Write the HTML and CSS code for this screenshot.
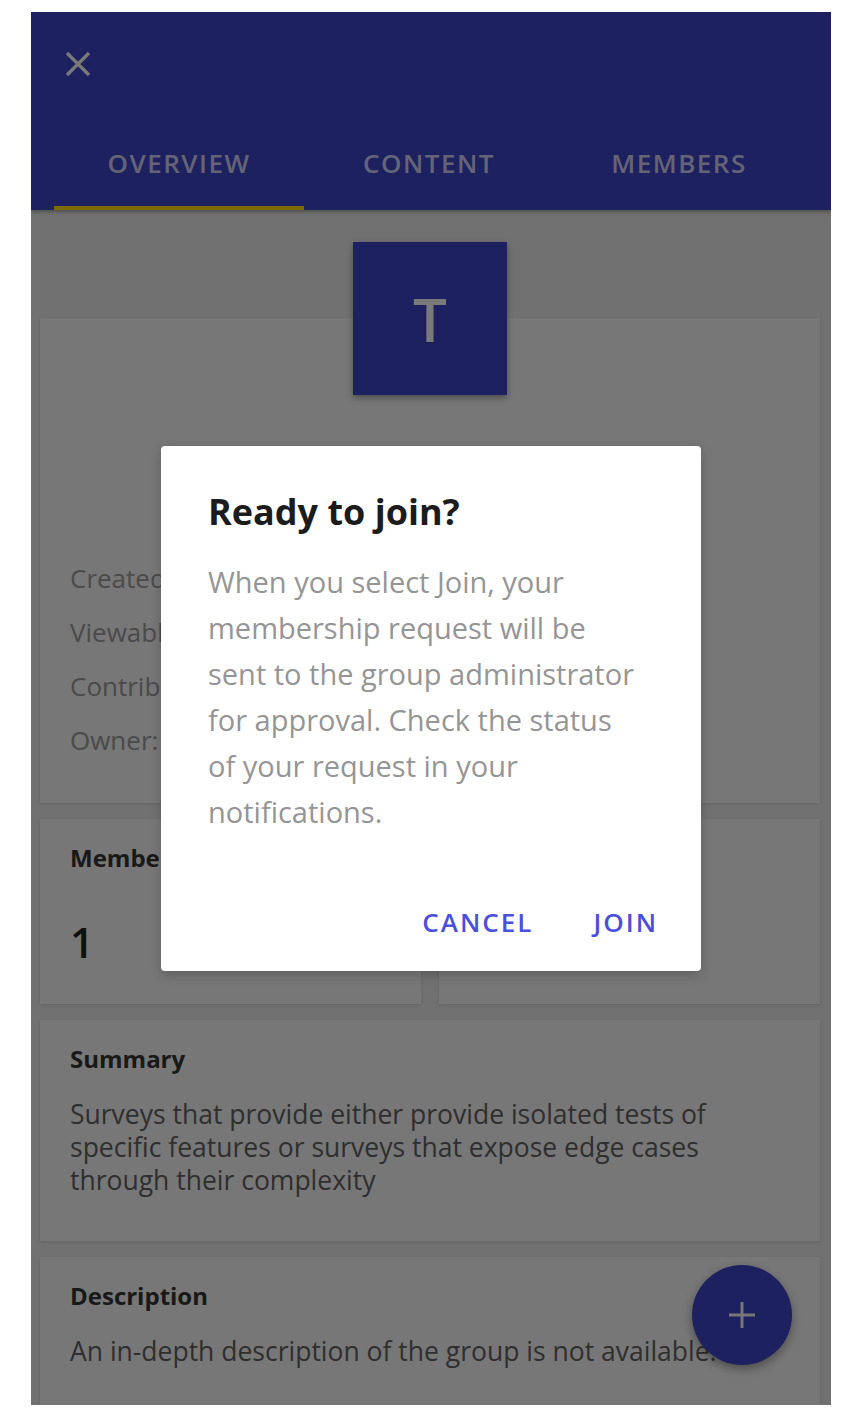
FILE: index.html
```html
<!DOCTYPE html>
<html lang="en">

	<head>
		<meta charset="UTF-8" />
		<meta name="viewport" content="width=device-width, initial-scale=1.0" />
		<title>Group overview</title>
		<link rel="stylesheet" href="styles.css">
	</head>

	<body>
		<div class="app">
			<header class="appbar">
				<div class="toolbar">
					<button class="close" aria-label="Close">
						<svg viewBox="0 0 28 28" width="28" height="28">
							<path d="M3 3 L25 25 M25 3 L3 25" />
						</svg>
					</button>
				</div>
				<nav class="tabs">
					<a class="tab active">Overview</a>
					<a class="tab">Content</a>
					<a class="tab">Members</a>
				</nav>
			</header>

			<main class="content">
				<div class="hero">
					<div class="avatar">T</div>
				</div>

				<section class="card info">
					<ul class="meta">
						<li>Created: 3/12/19</li>
						<li>Viewable by: All</li>
						<li>Contributors: All</li>
						<li>Owner: admin</li>
					</ul>
				</section>

				<div class="stats">
					<section class="card stat">
						<h2>Members</h2>
						<div class="count">1</div>
					</section>
					<!-- content count sits under the dialog -->
					<section class="card stat"></section>
				</div>

				<section class="card">
					<h2>Summary</h2>
					<p>Surveys that provide either provide isolated tests of specific features or surveys that expose edge cases
						through their complexity</p>
				</section>

				<section class="card">
					<h2>Description</h2>
					<p>An in-depth description of the group is not available.</p>
				</section>
			</main>

			<button class="fab" aria-label="Add">
				<svg viewBox="0 0 30 30" width="30" height="30">
					<path d="M15 2 V28 M2 15 H28" />
				</svg>
			</button>

			<div class="scrim">
				<div class="dialog">
					<h3 class="dialog-title">Ready to join?</h3>
					<p class="dialog-text">When you select Join, your membership request will be sent to the group administrator
						for approval. Check the status of your request in your notifications.</p>
					<div class="dialog-actions">
						<button class="btn">Cancel</button>
						<button class="btn">Join</button>
					</div>
				</div>
			</div>
		</div>
	</body>

</html>
```

FILE: styles.css
```css
body {
	margin: 0;
	background: #fff;
	font-family: "Open Sans", "Lato", sans-serif;
}

.app {
	position: relative;
	width: 800px;
	height: 1393px;
	margin: 12px 0 0 31px;
	overflow: hidden;
	background: #e2e2e2;
}

/* header */
.appbar {
	background: #3c42c0;
	box-shadow: 0 2px 4px rgba(0, 0, 0, 0.3);
	position: relative;
	z-index: 2;
}

.toolbar {
	height: 104px;
	display: flex;
	align-items: center;
	padding-left: 33px;
}

.close {
	background: none;
	border: 0;
	padding: 0;
	width: 28px;
	height: 28px;
	display: flex;
}

.close path {
	stroke: #f4f4f0;
	stroke-width: 3.2;
	fill: none;
}

.tabs {
	display: flex;
	padding: 0 27px 0 23px;
}

.tab {
	flex: 1;
	height: 94px;
	box-sizing: border-box;
	display: flex;
	align-items: center;
	justify-content: center;
	padding-top: 4px;
	border-bottom: 4px solid transparent;
	color: rgba(255, 255, 255, 0.72);
	font-size: 26px;
	font-weight: 600;
	letter-spacing: 1.5px;
	text-transform: uppercase;
}

.tab.active {
	border-bottom-color: #ffd600;
}

/* content */
.content {
	display: flex;
	flex-direction: column;
	gap: 16px;
	padding: 0 11px 0 9px;
}

.hero {
	padding-top: 32px;
	margin-bottom: -93px;
	position: relative;
	z-index: 1;
	display: flex;
	justify-content: center;
}

.avatar {
	width: 154px;
	height: 153px;
	background: #3c42c0;
	color: #f4f4f4;
	font-size: 60px;
	font-weight: 600;
	display: flex;
	align-items: center;
	justify-content: center;
	box-shadow: 0 3px 6px rgba(0, 0, 0, 0.35);
}

.card {
	background: #eeeeee;
	padding: 24px 30px 44px;
	box-shadow: 0 1px 3px rgba(0, 0, 0, 0.12);
}

.card h2 {
	margin: 0 0 24px;
	font-size: 24px;
	line-height: 30px;
	font-weight: 700;
	color: #333;
}

.card p {
	margin: 0;
	font-size: 26.5px;
	line-height: 33px;
	color: #5e5e5e;
}

.info {
	padding-top: 233px;
	padding-bottom: 36px;
}

.meta {
	list-style: none;
	margin: 0;
	padding: 0;
	font-size: 26px;
	line-height: 54px;
	color: #959595;
}

.stats {
	display: grid;
	grid-template-columns: 1fr 1fr;
	gap: 18px;
}

.stat {
	height: 185px;
	box-sizing: border-box;
}

.stat h2 {
	margin-bottom: 44px;
}

.count {
	font-size: 42px;
	line-height: 50px;
	font-weight: 600;
	color: #222;
}

.fab {
	position: absolute;
	right: 39px;
	bottom: 40px;
	width: 100px;
	height: 100px;
	border-radius: 50%;
	border: 0;
	background: #3c42c0;
	box-shadow: 0 4px 10px rgba(0, 0, 0, 0.35);
	display: flex;
	align-items: center;
	justify-content: center;
}

.fab path {
	stroke: #eee;
	stroke-width: 3;
	fill: none;
}

/* dialog */
.scrim {
	position: absolute;
	inset: 0;
	z-index: 10;
	background: rgba(0, 0, 0, 0.5);
	display: flex;
	align-items: center;
	justify-content: center;
}

.dialog {
	width: 540px;
	box-sizing: border-box;
	background: #fff;
	border-radius: 4px;
	padding: 46px 0 21px;
	box-shadow: 0 4px 12px rgba(0, 0, 0, 0.2);
}

.dialog-title {
	margin: 0 47px;
	font-size: 36px;
	line-height: 40px;
	font-weight: 700;
	color: #1c1c1c;
}

.dialog-text {
	margin: 27px 58px 0 47px;
	font-size: 29px;
	line-height: 46px;
	color: #959595;
}

.dialog-actions {
	display: flex;
	justify-content: flex-end;
	gap: 28px;
	margin-top: 59px;
	padding-right: 27px;
}

.btn {
	background: none;
	border: 0;
	height: 56px;
	padding: 0 16px;
	font-family: inherit;
	font-size: 26px;
	font-weight: 600;
	letter-spacing: 2px;
	text-transform: uppercase;
	color: #4a4fdc;
}
```
